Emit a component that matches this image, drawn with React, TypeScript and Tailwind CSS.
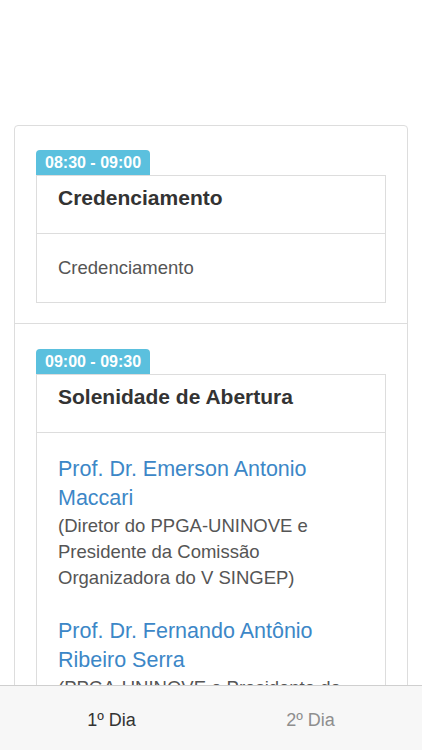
export default function App() {
  return (
    <div
      className="h-[750px] w-full flex flex-col bg-white overflow-hidden"
      style={{ fontFamily: '"Liberation Sans", Arial, sans-serif' }}
    >
      <div className="flex-1 overflow-hidden">
        <div className="h-[125px]" />
        <div className="mx-[14px] border border-[#dddddd] rounded-t-[4px]">
          <section className="px-[21px] pt-[24px] pb-[20px] border-b border-[#dddddd]">
            <span className="inline-block bg-[#5bc0de] text-white font-bold text-[16px] leading-[25px] px-[9px] rounded-t-[4px]">
              08:30 - 09:00
            </span>
            <div className="border border-[#dddddd]">
              <div className="h-[58px] px-[21px] pt-[8px] border-b border-[#dddddd]">
                <h3 className="text-[21px] leading-[28px] font-bold text-[#333333]">Credenciamento</h3>
              </div>
              <div className="p-[20px] px-[21px]">
                <p className="text-[18.5px] leading-[28px] text-[#555555]">Credenciamento</p>
              </div>
            </div>
          </section>
          <section className="px-[21px] pt-[25px]">
            <span className="inline-block bg-[#5bc0de] text-white font-bold text-[16px] leading-[25px] px-[9px] rounded-t-[4px]">
              09:00 - 09:30
            </span>
            <div className="border border-[#dddddd]">
              <div className="h-[58px] px-[21px] pt-[8px] border-b border-[#dddddd]">
                <h3 className="text-[21px] leading-[28px] font-bold text-[#333333]">Solenidade de Abertura</h3>
              </div>
              <div className="px-[21px] pt-[22px] pb-[20px]">
                <p className="text-[21.5px] leading-[29px] text-[#3c87c7]">Prof. Dr. Emerson Antonio Maccari</p>
                <p className="text-[18.5px] leading-[26px] text-[#555555]">
                  (Diretor do PPGA-UNINOVE e Presidente da Comissão Organizadora do V SINGEP)
                </p>
                <p className="mt-[26px] text-[21.5px] leading-[29px] text-[#3c87c7]">Prof. Dr. Fernando Antônio Ribeiro Serra</p>
                <p className="text-[18.5px] leading-[26px] text-[#555555]">
                  (PPGA-UNINOVE e Presidente do Comitê Científico do V SINGEP)
                </p>
              </div>
            </div>
          </section>
        </div>
      </div>
      <nav className="h-[65px] shrink-0 bg-[#f7f7f7] border-t border-[#cfcfcf] flex px-[12px]">
        <button className="flex-1 pt-[4px] text-[18px] text-[#333333]">1º Dia</button>
        <button className="flex-1 pt-[4px] text-[18px] text-[#8e8e8e]">2º Dia</button>
      </nav>
    </div>
  )
}
